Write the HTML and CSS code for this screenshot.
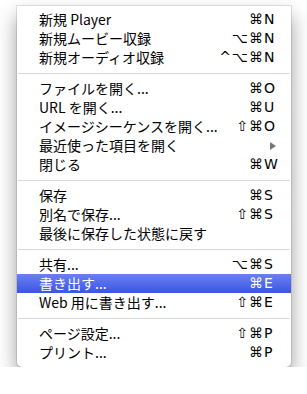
FILE: index.html
```html
<!DOCTYPE html>
<html lang="ja">
<head>
  <meta charset="UTF-8">
  <title>ファイル</title>
  <link rel="stylesheet" href="styles.css">
</head>
<body>
  <ul class="menu">
    <li class="item"><span class="label">新規 Player</span><span class="mods">⌘</span><span class="key">N</span></li>
    <li class="item"><span class="label">新規ムービー収録</span><span class="mods">⌥⌘</span><span class="key">N</span></li>
    <li class="item"><span class="label">新規オーディオ収録</span><span class="mods">^⌥⌘</span><span class="key">N</span></li>
    <li class="sep"></li>
    <li class="item"><span class="label">ファイルを開く...</span><span class="mods">⌘</span><span class="key">O</span></li>
    <li class="item"><span class="label">URL を開く...</span><span class="mods">⌘</span><span class="key">U</span></li>
    <li class="item"><span class="label">イメージシーケンスを開く...</span><span class="mods">⇧⌘</span><span class="key">O</span></li>
    <li class="item"><span class="label">最近使った項目を開く</span><span class="arrow"></span></li>
    <li class="item"><span class="label">閉じる</span><span class="mods">⌘</span><span class="key">W</span></li>
    <li class="sep"></li>
    <li class="item"><span class="label">保存</span><span class="mods">⌘</span><span class="key">S</span></li>
    <li class="item"><span class="label">別名で保存...</span><span class="mods">⇧⌘</span><span class="key">S</span></li>
    <li class="item"><span class="label">最後に保存した状態に戻す</span></li>
    <li class="sep"></li>
    <li class="item"><span class="label">共有...</span><span class="mods">⌥⌘</span><span class="key">S</span></li>
    <li class="item active"><span class="label">書き出す...</span><span class="mods">⌘</span><span class="key">E</span></li>
    <li class="item"><span class="label">Web 用に書き出す...</span><span class="mods">⇧⌘</span><span class="key">E</span></li>
    <li class="sep"></li>
    <li class="item"><span class="label">ページ設定...</span><span class="mods">⇧⌘</span><span class="key">P</span></li>
    <li class="item"><span class="label">プリント...</span><span class="mods">⌘</span><span class="key">P</span></li>
  </ul>
</body>
</html>
```

FILE: styles.css
```css
body {
  margin: 0;
  padding: 6px 16px 0 17px;
  background: #ffffff;
  font-family: "Noto Sans CJK JP", sans-serif;
}

.menu {
  list-style: none;
  margin: 0;
  padding: 4px 0 5px;
  width: 274px;
  background: #ffffff;
  border-radius: 0 0 5px 5px;
  box-shadow: 0 0 0 1px rgba(0, 0, 0, 0.1), 0 10px 20px rgba(0, 0, 0, 0.4);
}

.item {
  display: flex;
  align-items: center;
  height: 19px;
  padding: 0 14px 0 22px;
  font-size: 14px;
  line-height: 19px;
  color: #000000;
}

.label {
  flex: 1;
  white-space: nowrap;
}

.mods,
.key {
  font-family: "DejaVu Sans", sans-serif;
  font-size: 14px;
}

.mods {
  letter-spacing: 1px;
}

.key {
  width: 13px;
  text-align: left;
}

.arrow {
  width: 0;
  height: 0;
  margin-right: 1px;
  border-left: 6px solid #777777;
  border-top: 4px solid transparent;
  border-bottom: 4px solid transparent;
}

.sep {
  height: 1px;
  margin: 6px 1px 5px;
  background: #dadada;
}

.active {
  color: #ffffff;
  background: linear-gradient(#6a80f0, #3b55e5);
}
```
